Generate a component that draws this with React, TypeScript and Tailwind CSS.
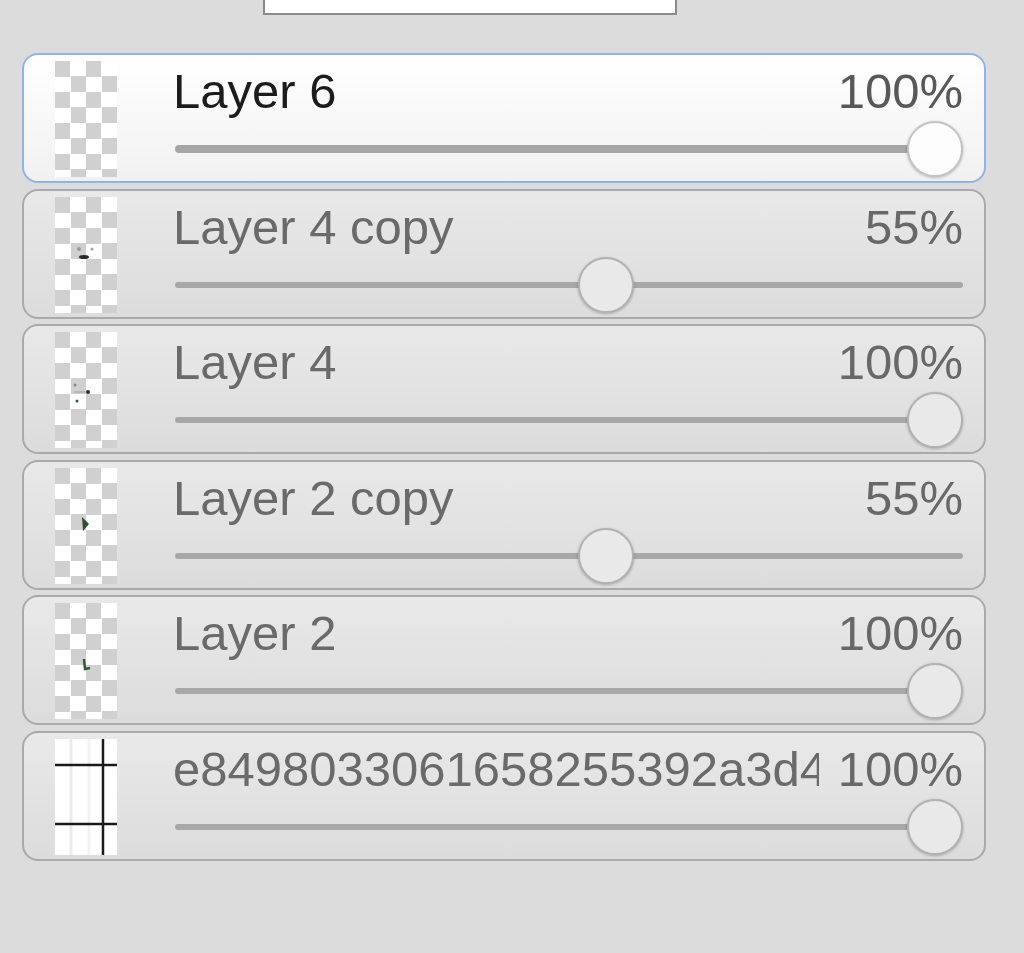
import React from "react";

type Layer = {
  name: string;
  opacity: number;
  active?: boolean;
  thumb: "blank" | "dash" | "dots" | "tri" | "tick" | "grid";
};

const layers: Layer[] = [
  { name: "Layer 6", opacity: 100, active: true, thumb: "blank" },
  { name: "Layer 4 copy", opacity: 55, thumb: "dash" },
  { name: "Layer 4", opacity: 100, thumb: "dots" },
  { name: "Layer 2 copy", opacity: 55, thumb: "tri" },
  { name: "Layer 2", opacity: 100, thumb: "tick" },
  { name: "e8498033061658255392a3d4", opacity: 100, thumb: "grid" },
];

const Marks = ({ kind }: { kind: Layer["thumb"] }) => {
  if (kind === "dash")
    return (
      <svg className="absolute inset-0" width="62" height="116" viewBox="0 0 62 116">
        <circle cx="24" cy="52" r="2" fill="#9a9a9a" />
        <circle cx="37" cy="52" r="1.5" fill="#a0a0a0" />
        <ellipse cx="29" cy="60" rx="5" ry="2" fill="#2a2a2a" />
      </svg>
    );
  if (kind === "dots")
    return (
      <svg className="absolute inset-0" width="62" height="116" viewBox="0 0 62 116">
        <circle cx="20" cy="53" r="1.5" fill="#8a8a8a" />
        <line x1="19" y1="60" x2="30" y2="60" stroke="#9a9a9a" strokeWidth="1" />
        <circle cx="33" cy="60" r="2" fill="#2b2b2b" />
        <circle cx="22" cy="69" r="1.5" fill="#3a5a3a" />
      </svg>
    );
  if (kind === "tri")
    return (
      <svg className="absolute inset-0" width="62" height="116" viewBox="0 0 62 116">
        <path d="M27 49 L34 56 L28 63 Z" fill="#2f4f2f" />
      </svg>
    );
  if (kind === "tick")
    return (
      <svg className="absolute inset-0" width="62" height="116" viewBox="0 0 62 116">
        <path d="M29 56 L30 66 L35 65" stroke="#2f5a33" strokeWidth="2.5" fill="none" />
      </svg>
    );
  if (kind === "grid")
    return (
      <svg className="absolute inset-0 bg-white" width="62" height="116" viewBox="0 0 62 116">
        <line x1="16" y1="0" x2="16" y2="116" stroke="#ececec" strokeWidth="3" />
        <line x1="34" y1="0" x2="34" y2="116" stroke="#f2f2f2" strokeWidth="3" />
        <line x1="0" y1="26" x2="62" y2="26" stroke="#1a1a1a" strokeWidth="2.5" />
        <line x1="0" y1="85" x2="62" y2="85" stroke="#1a1a1a" strokeWidth="2.5" />
        <line x1="48" y1="0" x2="48" y2="116" stroke="#1a1a1a" strokeWidth="2.5" />
      </svg>
    );
  return null;
};

const LayerRow = ({ layer }: { layer: Layer }) => {
  const { active } = layer;
  return (
    <div
      className={`flex h-[130px] rounded-[16px] border-2 pr-[21px] ${
        active
          ? "border-[#8db4ee] bg-linear-to-b from-white to-[#f1f1f1]"
          : "border-[#aaaaaa] bg-linear-to-b from-[#e9e9e9] to-[#dcdcdc]"
      }`}
    >
      <div className="relative ml-[31px] mt-[6px] h-[116px] w-[62px] shrink-0 bg-[conic-gradient(#fff_25%,#d0d0d0_0_50%,#fff_0_75%,#d0d0d0_0)] bg-[length:31px_31px]">
        <Marks kind={layer.thumb} />
      </div>
      <div className="ml-[56px] flex min-w-0 flex-1 flex-col pt-[8px]">
        <div className="flex h-[56px] items-center gap-[19px] font-['Liberation_Sans',Arial,sans-serif] text-[49px] leading-[56px]">
          <div
            className={`min-w-0 flex-1 overflow-hidden whitespace-nowrap ${
              active ? "text-[#1c1c1c]" : "text-[#6a6a6a]"
            }`}
          >
            {layer.name}
          </div>
          <div className={active ? "text-[#585858]" : "text-[#686868]"}>
            {layer.opacity}%
          </div>
        </div>
        <div className="relative ml-[2px] mt-[2px] h-[56px]">
          <div
            className={`absolute left-0 right-0 top-1/2 -translate-y-1/2 rounded-full ${
              active ? "h-[8px] bg-[#a6a6a6]" : "h-[6px] bg-[#a8a8a8]"
            }`}
          />
          <div
            className={`absolute top-0 h-[56px] w-[56px] rounded-full border-2 shadow-[0_1px_3px_rgba(0,0,0,0.25)] ${
              active
                ? "border-[#c4c4c4] bg-[#fdfdfd]"
                : "border-[#b2b2b2] bg-[#e9e9e9]"
            }`}
            style={{ left: `calc((100% - 56px) * ${layer.opacity / 100})` }}
          />
        </div>
      </div>
    </div>
  );
};

export default function App() {
  return (
    <main className="min-h-screen w-full bg-[#dcdcdc] pb-10">
      <div className="ml-[263px] h-[15px] w-[414px] border-2 border-t-0 border-[#8a8a8a] bg-white" />
      <div className="ml-[22px] mt-[38px] flex w-[964px] flex-col gap-[5.5px]">
        {layers.map((layer, i) => (
          <LayerRow key={i} layer={layer} />
        ))}
      </div>
    </main>
  );
}
